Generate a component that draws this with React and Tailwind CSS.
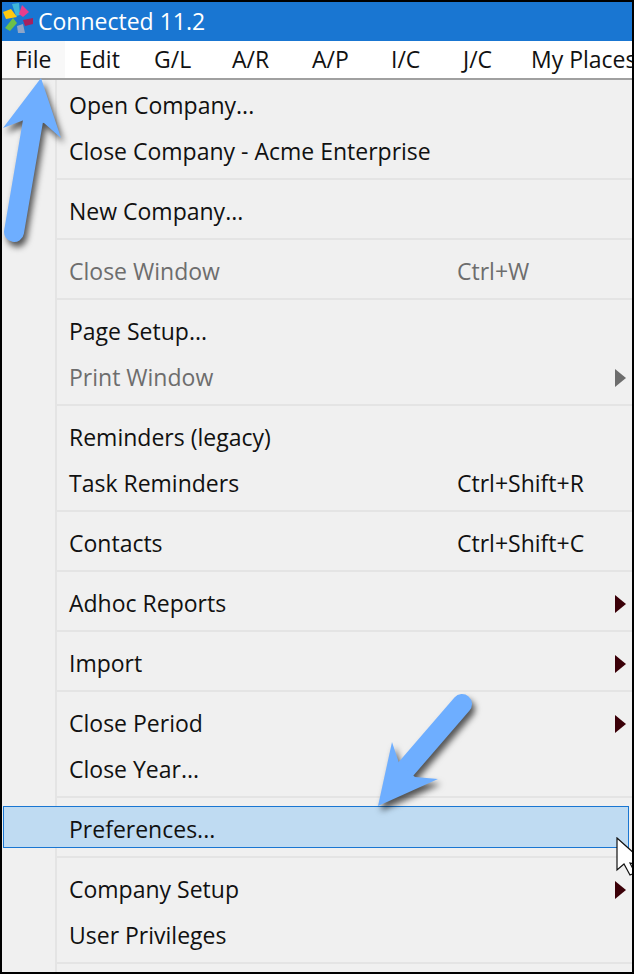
const font = { fontFamily: '"Open Sans", "Noto Sans", sans-serif' }

const menus = [
  ['File', 'w-[63px] bg-[#f8f8f8] pl-[13px]'],
  ['Edit', 'w-[80px] pl-[14px]'],
  ['G/L', 'w-[78px] pl-[9px]'],
  ['A/R', 'w-[80px] pl-[9px]'],
  ['A/P', 'w-[79px] pl-[9px]'],
  ['I/C', 'w-[72px] pl-[9px]'],
  ['J/C', 'w-[68px] pl-[9px]'],
  ['My Places', 'pl-[9px]'],
]

// null = separator
const rows = [
  { label: 'Open Company...' },
  { label: 'Close Company - Acme Enterprise' },
  null,
  { label: 'New Company...' },
  null,
  { label: 'Close Window', shortcut: 'Ctrl+W', disabled: true },
  null,
  { label: 'Page Setup...' },
  { label: 'Print Window', arrow: true, disabled: true },
  null,
  { label: 'Reminders (legacy)' },
  { label: 'Task Reminders', shortcut: 'Ctrl+Shift+R' },
  null,
  { label: 'Contacts', shortcut: 'Ctrl+Shift+C' },
  null,
  { label: 'Adhoc Reports', arrow: true },
  null,
  { label: 'Import', arrow: true },
  null,
  { label: 'Close Period', arrow: true },
  { label: 'Close Year...' },
  null,
  { label: 'Preferences...', active: true },
  null,
  { label: 'Company Setup', arrow: true },
  { label: 'User Privileges' },
  null,
]

function Logo() {
  return (
    <svg width="36" height="39" viewBox="2 2 36 39" className="shrink-0">
      <polygon points="12,4 19,3 20,15 16,16" fill="#3fb6d8" />
      <polygon points="22,5 29,12 23,17 19,14" fill="#e83e8c" />
      <polygon points="23,20 33,18 33,24 25,26" fill="#a5215f" />
      <polygon points="17,26 23,24 25,33 18,33" fill="#8fa6c8" />
      <polygon points="5,28 13,18 17,23 10,31" fill="#6cc04a" />
      <polygon points="3,12 11,9 17,17 6,19" fill="#ffc90e" />
    </svg>
  )
}

function Row({ row }) {
  return (
    <div className={`relative flex h-[46px] items-center ${row.disabled ? 'text-[#6d6d6d]' : 'text-[#111]'}`}>
      {row.active && (
        <div className="absolute left-[1px] right-[3px] top-[-1px] h-[42px] border border-[#1976d2] bg-[#bfdbf2]" />
      )}
      <span className="w-[55px] shrink-0 self-stretch border-r-2 border-[#e4e4e4]" />
      <span className="relative top-[-1px] ml-[12px] w-[388px]">{row.label}</span>
      {row.shortcut && <span className="relative top-[-1px]">{row.shortcut}</span>}
      {row.arrow && (
        <span
          className={`ml-auto mr-[6px] h-0 w-0 border-y-[9px] border-l-[11px] border-y-transparent ${
            row.disabled ? 'border-l-[#6d6d6d]' : 'border-l-[#3b0008]'
          }`}
        />
      )}
    </div>
  )
}

function Separator() {
  return (
    <div className="flex h-[14px]">
      <span className="w-[55px] shrink-0 border-r-2 border-[#e4e4e4]" />
      <div className="mt-[3px] h-[2px] flex-1 bg-[#e4e4e4]" />
    </div>
  )
}

export default function App() {
  return (
    <div style={font} className="relative h-[974px] w-[634px] overflow-hidden border-2 border-black bg-[#f0f0f0] text-[23px] leading-none">
      <div className="flex h-[39px] items-center bg-[#1976d2] text-white">
        <Logo />
        <span>Connected 11.2</span>
      </div>
      <div className="flex h-[39px] items-center overflow-hidden whitespace-nowrap border-b-2 border-[#a0a0a0] bg-white text-[#111]">
        {menus.map(([name, cls]) => (
          <span key={name} className={`flex h-full shrink-0 items-center ${cls}`}>{name}</span>
        ))}
      </div>
      <div className="flex">
        <span className="h-[3px] w-[55px] border-r-2 border-[#e4e4e4]" />
      </div>
      {rows.map((row, i) => (row ? <Row key={i} row={row} /> : <Separator key={i} />))}

      {/* callout arrows and the pointer sit on top of the menu */}
      <svg className="absolute left-[-2px] top-[-2px] drop-shadow-[3px_5px_3px_rgba(0,0,0,0.65)]" width="634" height="974" viewBox="0 0 634 974" fill="none">
        <line x1="14" y1="232" x2="34" y2="115" stroke="#6eaeff" strokeWidth="20" strokeLinecap="round" />
        <polygon points="41,78 3,128 24,120 44,123 61,138" fill="#6eaeff" />
        <line x1="462" y1="704" x2="405" y2="770" stroke="#6eaeff" strokeWidth="20" strokeLinecap="round" />
        <polygon points="378,806 392,742 399,763 415,777 438,779" fill="#6eaeff" />
      </svg>
      <svg className="absolute left-[614px] top-[835px]" width="19" height="40" viewBox="0 0 19 40">
        <polygon points="1,1 19,17 19,27 14,26 19,36 14,38 8,27 1,33" fill="#fff" stroke="#111" strokeWidth="1.2" />
      </svg>
    </div>
  )
}
